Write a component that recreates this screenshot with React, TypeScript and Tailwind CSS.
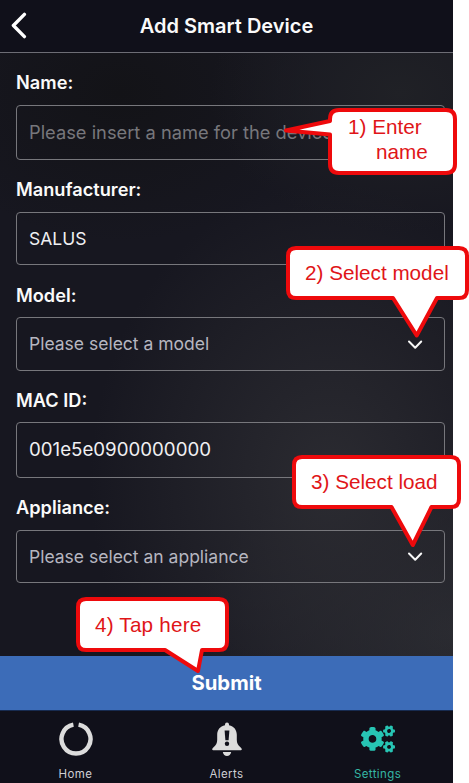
import type { ReactNode } from 'react';
import { FaCogs } from 'react-icons/fa';

const RED = '#ee0a0c';

function Field({ label, gap, height, mt, children }: { label: string; gap: string; height: string; mt: string; children: ReactNode }) {
  return (
    <div className={mt}>
      <div className="h-5 text-[18.2px] leading-[21px] font-semibold text-[#fafafa]">{label}</div>
      <div className={`${gap} ${height} flex items-center justify-between rounded-[4px] border border-[#77777c] pt-px pr-[21px] pl-3 text-[17.5px]`}>
        {children}
      </div>
    </div>
  );
}

function Chevron() {
  return (
    <svg className="h-[10px] w-4" viewBox="0 0 16 10" fill="none" stroke="#f8f8f8" strokeWidth="2" strokeLinecap="round" strokeLinejoin="round">
      <path d="M2 1.5 L8.2 7.7 L14.2 1.5" />
    </svg>
  );
}

function Callouts() {
  return (
    <div className="pointer-events-none absolute inset-0 font-['Liberation_Sans',Arial,sans-serif] text-[20.7px] leading-[25px] whitespace-nowrap text-[#e01518]">
      <svg className="absolute inset-0" width="469" height="783" fill="#fff" stroke={RED} strokeWidth="4" strokeLinejoin="round">
        <path d="M339 110H446Q455 110 455 119V164Q455 173 446 173H339Q330 173 330 164V134.5L286 130.5L330 121V119Q330 110 339 110Z" />
        <path d="M296 248H459Q467 248 467 256V290Q467 298 459 298H437L416.7 335.5L393 298H296Q288 298 288 290V256Q288 248 296 248Z" />
        <path d="M302 457H451Q459 457 459 465V499Q459 507 451 507H431.5L412.8 545L391.5 507H302Q294 507 294 499V465Q294 457 302 457Z" />
        <path d="M86 599H219Q227 599 227 607V642Q227 650 219 650H202L198 671L165 650H86Q78 650 78 642V607Q78 599 86 599Z" />
      </svg>
      <div className="absolute top-[114px] left-[348px]">1) Enter</div>
      <div className="absolute top-[139px] left-[376px]">name</div>
      <div className="absolute top-[260px] left-[305px]">2) Select model</div>
      <div className="absolute top-[469px] left-[311px]">3) Select load</div>
      <div className="absolute top-[612px] left-[95px] tracking-[0.2px]">4) Tap here</div>
    </div>
  );
}

function Tab({ label, color, children }: { label: string; color: string; children: ReactNode }) {
  return (
    <div className={`flex flex-1 flex-col items-center ${color}`}>
      <div className="mt-[10px] flex h-9 items-center">{children}</div>
      <div className="mt-[9px] text-[11.5px] leading-4 tracking-[0.4px]">{label}</div>
    </div>
  );
}

export default function App() {
  return (
    <div className="relative h-[783px] w-[469px] overflow-hidden bg-white">
      <div className="flex h-full w-[453px] flex-col bg-[#10101a] font-[Inter,sans-serif]">
        <header className="flex h-[53px] shrink-0 items-center border-b border-[#6d6d75] px-[10px]">
          <svg className="h-[28px] w-[18px]" viewBox="0 0 18 28" fill="none" stroke="#fff" strokeWidth="3.4" strokeLinecap="round" strokeLinejoin="round">
            <path d="M14.4 2.4 L3.4 13.5 L14.4 24.6" />
          </svg>
          <h1 className="flex-1 pr-[18px] text-center text-[20px] font-semibold text-[#fafafa]">Add Smart Device</h1>
        </header>
        <main className="h-[603px] shrink-0 bg-[#171720] bg-[radial-gradient(ellipse_190px_140px_at_400px_40px,#202126,transparent),radial-gradient(ellipse_240px_300px_at_330px_430px,#2b2b31,transparent),radial-gradient(ellipse_260px_180px_at_453px_580px,#2a2b31,transparent),radial-gradient(ellipse_200px_150px_at_120px_40px,#131317,transparent)] pr-2 pl-4">
          <Field label="Name:" mt="pt-[19px]" gap="mt-[13px]" height="h-[55px]">
            <span className="text-[18.3px] text-[#77777c]">Please insert a name for the device</span>
          </Field>
          <Field label="Manufacturer:" mt="mt-[19px]" gap="mt-[13px]" height="h-[53px]">
            <span className="text-[#f0f0f2]">SALUS</span>
          </Field>
          <Field label="Model:" mt="mt-[20px]" gap="mt-[12px]" height="h-[54px]">
            <span className="text-[#b6b6c0]">Please select a model</span>
            <Chevron />
          </Field>
          <Field label="MAC ID:" mt="mt-[19px]" gap="mt-[12px]" height="h-[56px]">
            <span className="text-[18.7px] text-[#f0f0f2]">001e5e0900000000</span>
          </Field>
          <Field label="Appliance:" mt="mt-[19px]" gap="mt-[13px]" height="h-[53px]">
            <span className="text-[#b6b6c0]">Please select an appliance</span>
            <Chevron />
          </Field>
        </main>
        <button className="h-[54px] shrink-0 bg-[#3c6cb8] text-[20.3px] font-bold text-white">Submit</button>
        <nav className="flex flex-1 border-t border-[#172b50]">
          <Tab label="Home" color="text-[#cfcfd4]">
            <svg className="size-[34px]" viewBox="0 0 34 34" fill="none" stroke="#dcdcdc" strokeWidth="4.4">
              <path d="M19.600 2.700 A14.500 14.500 0 1 1 14.400 2.700" />
            </svg>
          </Tab>
          <Tab label="Alerts" color="text-[#cfcfd4]">
            <svg className="h-[34px] w-[30px]" viewBox="0 0 30 34" fill="#dcdcdc">
              <path d="M13 2.5a2 2 0 0 1 4 0v.7c5 1 7.8 4.8 7.8 9.500v5.100c0 3.200 1.100 5.500 3.900 7.700 1.900 1.500 1.100 2.700-.4 2.700H1.700c-1.500 0-2.300-1.200-.4-2.700 2.800-2.200 3.900-4.500 3.900-7.700v-5.100c0-4.700 2.800-8.500 7.800-9.500z" />
              <path d="M10.800 30h8.400c-.5 2.400-2.100 4-4.200 4s-3.700-1.600-4.200-4z" />
              <path d="M12.600 8.500h4.800l-.8 9.800h-3.200z" fill="#10101a" />
              <circle cx="15" cy="21.800" r="2.200" fill="#10101a" />
            </svg>
          </Tab>
          <Tab label="Settings" color="text-[#35b6a5]">
            <FaCogs className="mb-px ml-px size-[34px] text-[#27c5b4]" />
          </Tab>
        </nav>
      </div>
      <Callouts />
    </div>
  );
}
